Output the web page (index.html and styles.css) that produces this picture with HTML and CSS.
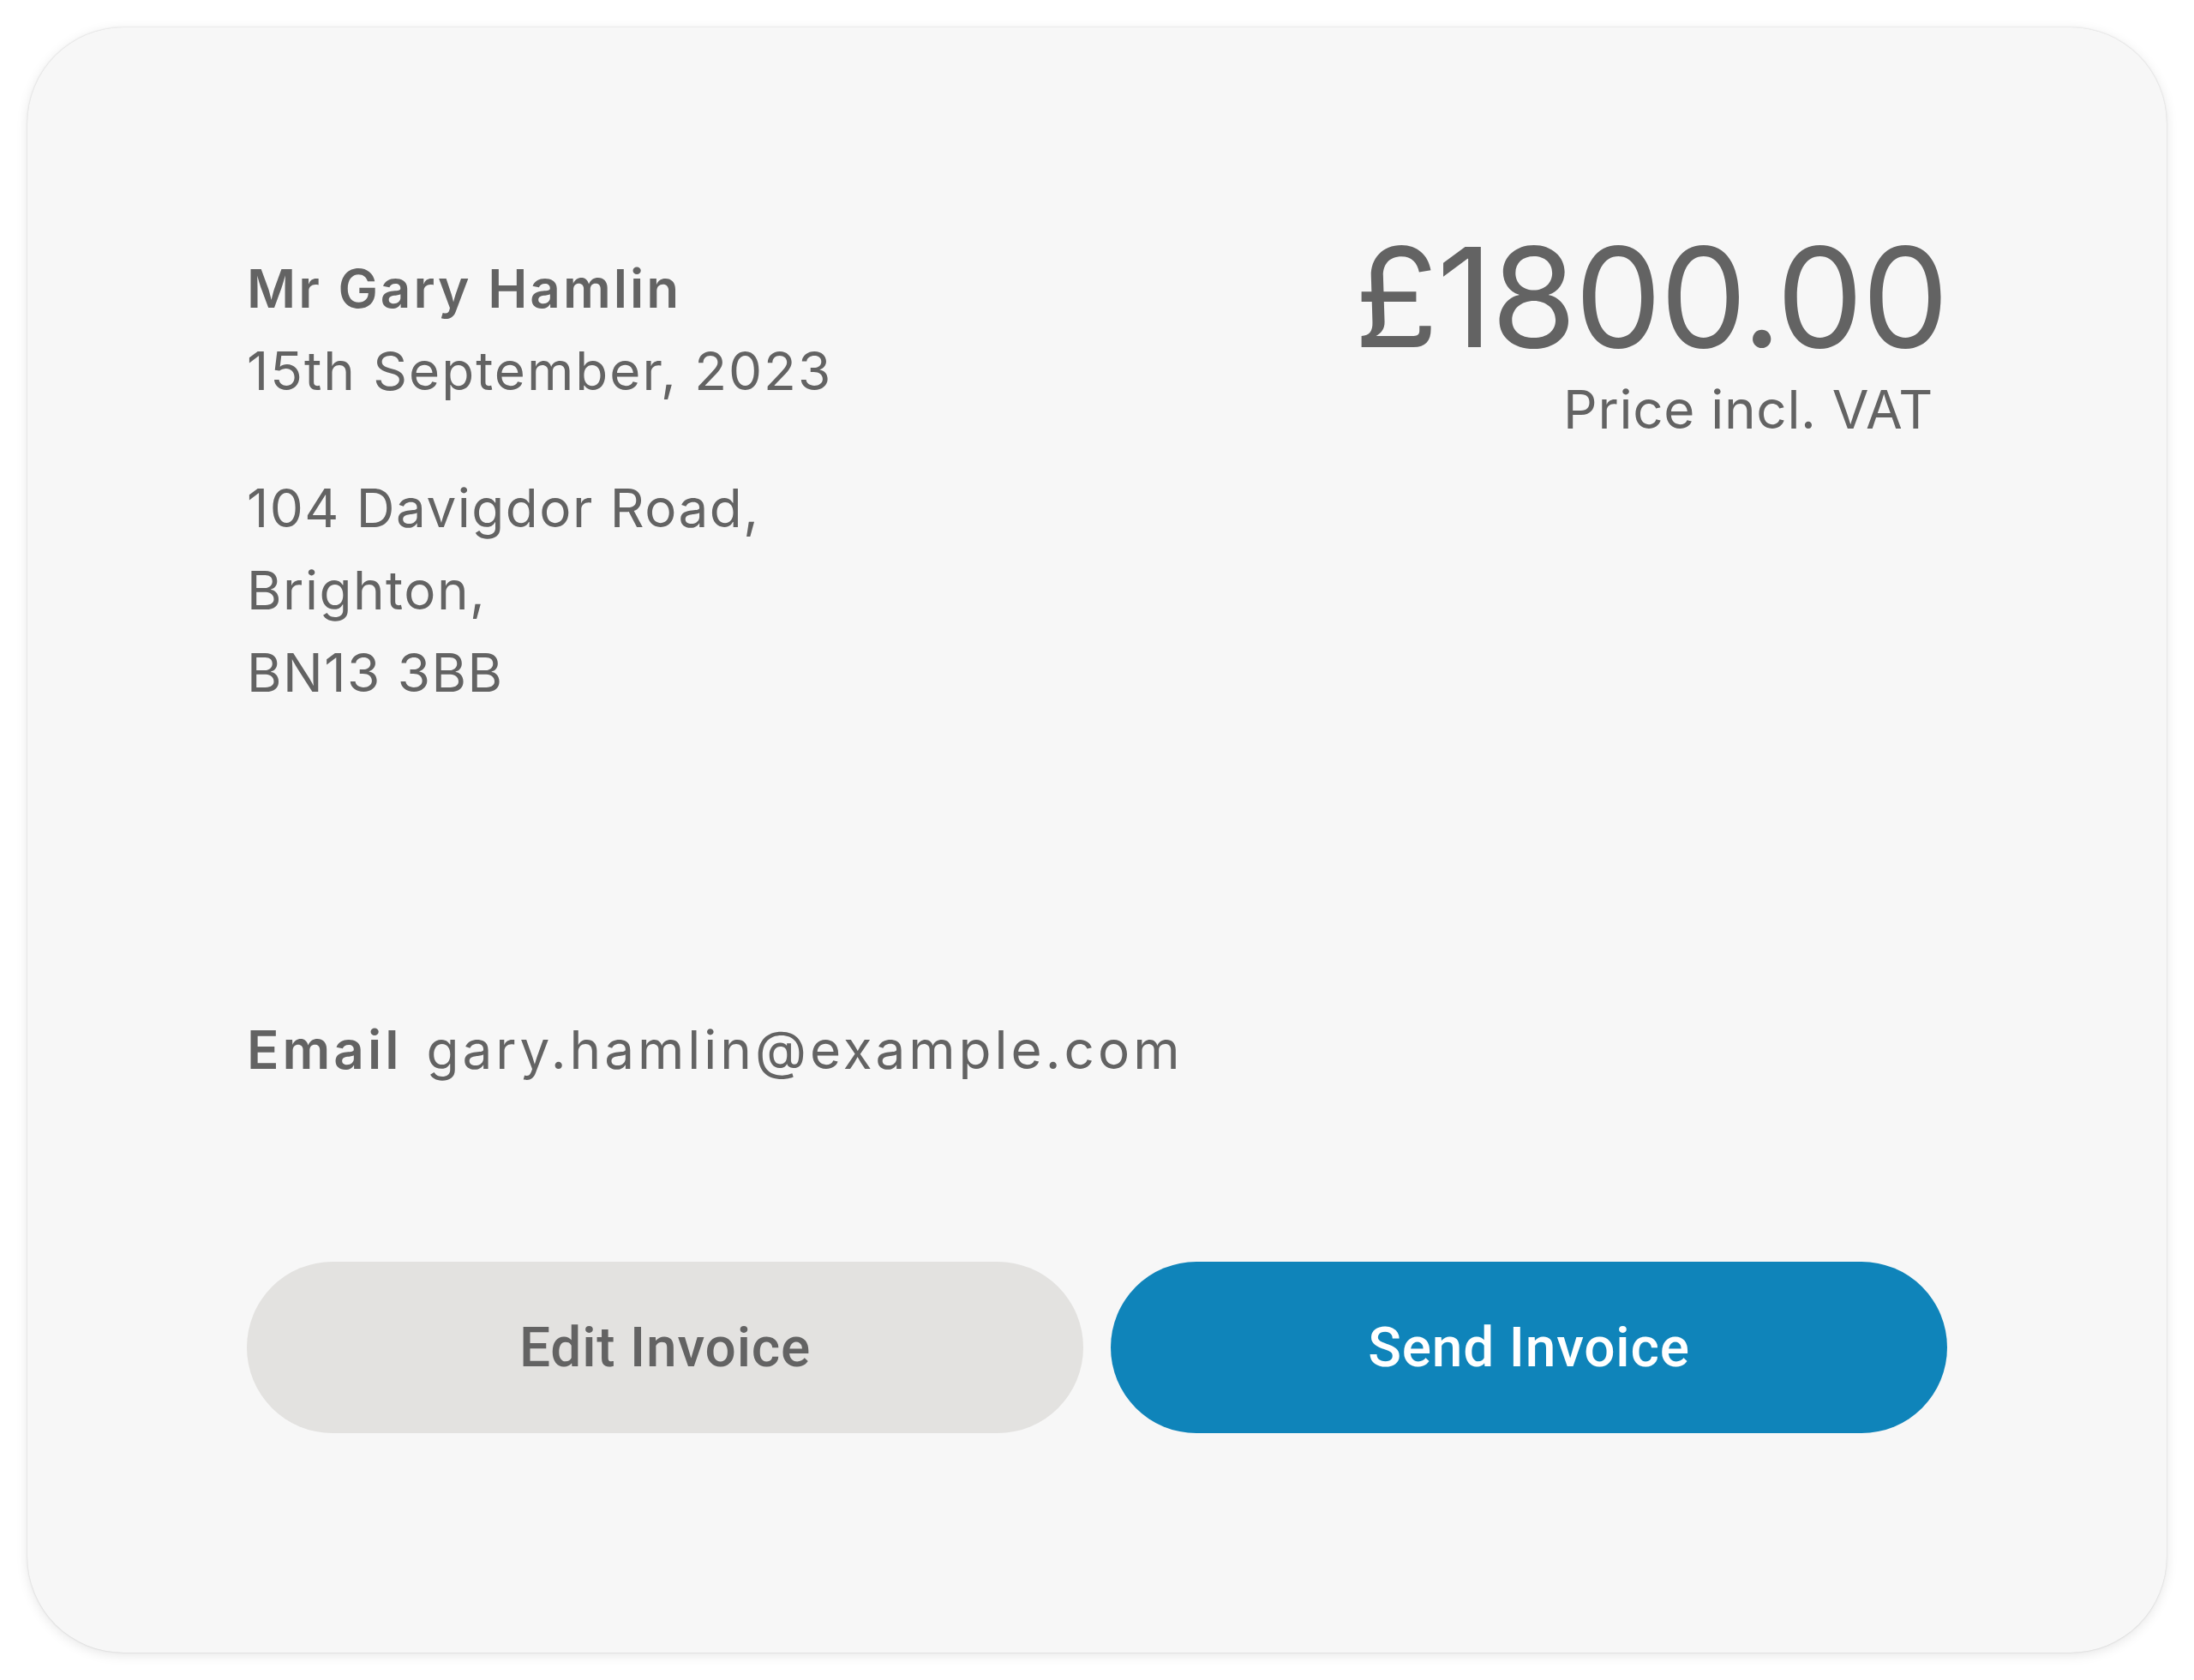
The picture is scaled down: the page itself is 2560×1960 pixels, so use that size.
FILE: index.html
```html
<!DOCTYPE html>
<html lang="en">
<head>
<meta charset="utf-8">
<title>Invoice</title>
<link rel="stylesheet" href="styles.css">
</head>
<body>
<main class="card">
  <section class="top">
    <div class="customer">
      <p class="name">Mr Gary Hamlin</p>
      <p class="date">15th September, 2023</p>
      <address class="address">104 Davigdor Road,<br>Brighton,<br>BN13 3BB</address>
    </div>
    <div class="total">
      <p class="amount">£1800.00</p>
      <p class="vat">Price incl. VAT</p>
    </div>
  </section>
  <p class="email"><span class="label">Email</span><span class="value">gary.hamlin@example.com</span></p>
  <div class="actions">
    <button class="btn btn-edit" type="button">Edit Invoice</button>
    <button class="btn btn-send" type="button">Send Invoice</button>
  </div>
</main>
</body>
</html>
```

FILE: styles.css
```css
* { box-sizing: border-box; }

html, body {
  margin: 0;
  height: 100%;
  background: #ffffff;
}

body {
  padding: 32px;
  font-family: "Inter", "Open Sans", sans-serif;
  color: #636363;
}

.card {
  height: 100%;
  display: flex;
  flex-direction: column;
  padding: 257px 256px 256px 256px;
  background: #f7f7f7;
  border-radius: 112px;
  box-shadow: 0 0 2px rgba(0, 0, 0, 0.18), 0 3px 14px rgba(0, 0, 0, 0.10);
}

.top {
  display: flex;
  justify-content: space-between;
  align-items: flex-start;
}

.name {
  margin: 0;
  font-size: 62px;
  line-height: 96px;
  font-weight: 600;
  letter-spacing: 3px;
}

.date {
  margin: 0;
  font-size: 62px;
  line-height: 96px;
  font-weight: 400;
  letter-spacing: 2px;
}

.address {
  margin: 64px 0 0 0;
  font-style: normal;
  font-size: 62px;
  line-height: 96px;
  letter-spacing: 1.5px;
}

.total {
  text-align: right;
}

.amount {
  margin: 0;
  font-size: 161px;
  line-height: 116px;
  font-weight: 400;
  letter-spacing: -2px;
}

.vat {
  margin: 25px 0 0 0;
  padding-right: 16px;
  font-size: 62px;
  line-height: 96px;
  letter-spacing: 0.7px;
}

.email {
  margin: auto 0 0 0;
  font-size: 62px;
  line-height: 96px;
}

.label {
  font-weight: 600;
  letter-spacing: 4px;
  margin-right: 28px;
}

.value {
  letter-spacing: 4px;
}

.actions {
  margin-top: 199px;
  display: flex;
  gap: 32px;
}

.btn {
  flex: 1;
  height: 200px;
  border: none;
  border-radius: 100px;
  font-family: "Roboto", sans-serif;
  font-size: 64px;
  font-weight: 500;
  letter-spacing: 0.8px;
  cursor: pointer;
}

.btn-edit {
  background: #e3e2e0;
  color: #636363;
}

.btn-send {
  background: #0f84ba;
  color: #ffffff;
}
```
